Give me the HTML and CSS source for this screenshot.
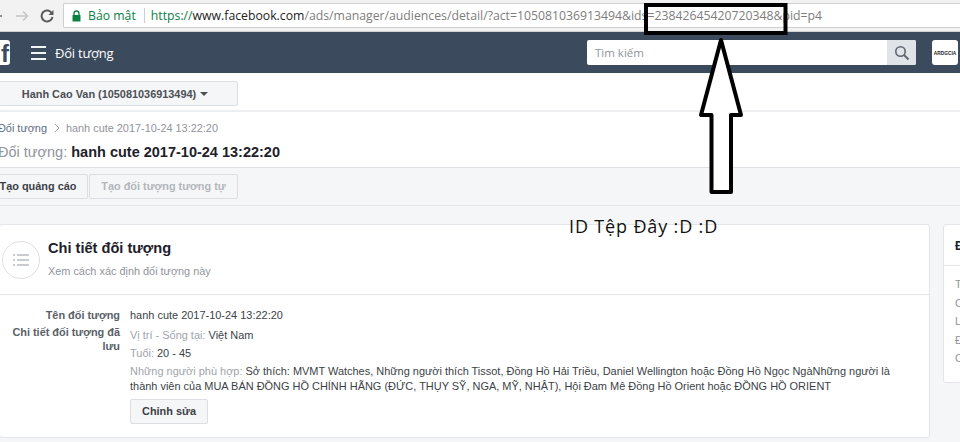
FILE: index.html
```html
<!DOCTYPE html>
<html lang="vi">
<head>
<meta charset="utf-8">
<title>Đối tượng</title>
<link rel="stylesheet" href="styles.css">
</head>
<body>
<div class="page">
  <header class="browser">
    <svg class="nav-icon back" width="12" height="14" viewBox="0 0 12 14"><path d="M11 7H2M6 2.500L1.500 7 6 11.500" fill="none" stroke="#6a6a6a" stroke-width="1.600"/></svg>
    <svg class="nav-icon fwd" width="14" height="14" viewBox="0 0 14 14"><path d="M1 7h11M8 2.500L12.500 7 8 11.500" fill="none" stroke="#c6c6c6" stroke-width="1.600"/></svg>
    <svg class="nav-icon reload" width="14" height="14" viewBox="0 0 14 14"><path d="M12 4.500A5.500 5.500 0 1 0 12.500 8" fill="none" stroke="#5a5a5a" stroke-width="2"/><path d="M13.500 1v5h-5z" fill="#5a5a5a"/></svg>
    <div class="omnibox">
      <svg class="lock" width="9" height="12" viewBox="0 0 9 12"><path d="M2 5V3.500a2.500 2.500 0 0 1 5 0V5" fill="none" stroke="#0b8043" stroke-width="1.300"/><rect x="0.500" y="5" width="8" height="6.500" rx="0.500" fill="#0b8043"/></svg>
      <span class="secure">Bảo mật</span>
      <span class="divider"></span>
      <span class="url"><span class="scheme">https://</span><span class="host">www.facebook.com</span>/ads/manager/audiences/detail/?act=105081036913494&amp;ids=23842645420720348&amp;pid=p4</span>
    </div>
  </header>

  <nav class="topbar">
    <div class="brand">f</div>
    <span class="burger"><i></i><i></i><i></i></span>
    <span class="section">Đối tượng</span>
    <div class="search">
      <span class="search-text">Tìm kiếm</span>
      <span class="search-btn">
        <svg width="16" height="16" viewBox="0 0 16 16"><circle cx="6.500" cy="6.500" r="4.700" fill="none" stroke="#5d6670" stroke-width="1.600"/><path d="M10 10l4.500 4.500" stroke="#5d6670" stroke-width="2"/></svg>
      </span>
    </div>
    <div class="avatar"><span>ARDGCIA</span></div>
  </nav>

  <div class="account-row">
    <button class="account">Hanh Cao Van (105081036913494)<i class="caret"></i></button>
  </div>

  <section class="heading">
    <div class="crumbs"><span class="crumb-link">Đối tượng</span><svg width="6" height="10" viewBox="0 0 6 10"><path d="M1 1l4 4-4 4" fill="none" stroke="#a0a4ab" stroke-width="1"/></svg><span class="crumb-cur">hanh cute 2017-10-24 13:22:20</span></div>
    <h1 class="title"><span class="title-pre">Đối tượng:</span> <b>hanh cute 2017-10-24 13:22:20</b></h1>
  </section>

  <div class="actions">
    <button class="btn first">Tạo quảng cáo</button>
    <button class="btn off">Tạo đối tượng tương tự</button>
  </div>

  <main class="content">
    <article class="card main-card">
      <div class="card-head">
        <span class="round">
          <svg width="16" height="14" viewBox="0 0 16 14"><path d="M0 2h2M4 2h12M0 7h2M4 7h12M0 12h2M4 12h12" stroke="#c9ccd1" stroke-width="2"/></svg>
        </span>
        <div>
          <h2 class="card-title">Chi tiết đối tượng</h2>
          <p class="card-sub">Xem cách xác định đối tượng này</p>
        </div>
      </div>
      <div class="card-body">
        <div class="labels">
          <div class="label">Tên đối tượng</div>
          <div class="label">Chi tiết đối tượng đã lưu</div>
        </div>
        <div class="values">
          <div class="v-name">hanh cute 2017-10-24 13:22:20</div>
          <div class="v-line"><span class="muted">Vị trí - Sống tại:</span> Việt Nam</div>
          <div class="v-line"><span class="muted">Tuổi:</span> 20 - 45</div>
          <div class="v-para"><span class="muted">Những người phù hợp:</span> Sở thích: MVMT Watches, Những người thích Tissot, Đồng Hồ Hải Triều, Daniel Wellington hoặc Đồng Hồ Ngọc NgàNhững người là thành viên của MUA BÁN ĐỒNG HỒ CHÍNH HÃNG (ĐỨC, THỤY SỸ, NGA, MỸ, NHẬT), Hội Đam Mê Đồng Hồ Orient hoặc ĐỒNG HỒ ORIENT</div>
          <button class="btn edit">Chỉnh sửa</button>
        </div>
      </div>
    </article>
    <aside class="card side-card">
      <div class="side-head">Đ</div>
      <div class="side-list"><span>T</span><span>C</span><span>L</span><span>Đ</span><span>C</span></div>
    </aside>
  </main>

  <svg class="annot" width="960" height="442" viewBox="0 0 960 442">
    <rect x="646" y="5" width="139.500" height="28" fill="none" stroke="#000" stroke-width="4"/>
    <path d="M721 40L701 115H711.500V192H731V115H741Z" fill="#fff" stroke="#000" stroke-width="4" stroke-linejoin="round"/>
  </svg>
  <div class="note">ID Tệp Đây :D :D</div>
</div>
</body>
</html>
```
FILE: styles.css
```css
* { box-sizing: border-box; }
html, body { margin: 0; padding: 0; }
body { width: 960px; height: 442px; overflow: hidden; background: #f5f6f7; font-family: "Liberation Sans", Arial, sans-serif; color: #1d2129; }
button { font-family: inherit; }
.page { position: relative; width: 960px; height: 442px; overflow: hidden; }

.browser { height: 32px; background: #f2f2f2; display: flex; align-items: center; border-bottom: 1px solid #d0d0d0; }
.nav-icon { flex: none; }
.back { margin-left: -9px; margin-right: 12px; }
.fwd { margin-right: 11px; }
.reload { margin-right: 9px; }
.omnibox { flex: 1; height: 25px; background: #fff; border: 1px solid #cfcfcf; border-right: 0; border-radius: 2px 0 0 2px; display: flex; align-items: center; padding-left: 8px; font-family: "Open Sans", sans-serif; font-size: 12.250px; white-space: nowrap; color: #7d7d7d; }
.lock { flex: none; margin-right: 7px; }
.secure { color: #0b8043; }
.divider { width: 1px; height: 15px; background: #cfcfcf; margin: 0 6px 0 8px; }
.scheme { color: #0b8043; }
.host { color: #222; }

.topbar { height: 41px; background: #3b4a5c; display: flex; align-items: center; color: #fff; }
.brand { width: 10px; height: 25px; margin-top: -1px; background: #fff; border-radius: 0 3px 3px 0; color: #3b4a5c; font-weight: 700; font-size: 24px; line-height: 28px; text-align: right; padding-right: 1px; overflow: hidden; }
.burger { display: flex; flex-direction: column; gap: 4px; width: 15px; margin-left: 21px; }
.burger i { display: block; height: 2px; background: #f3f4f5; }
.section { margin-left: 9px; font-family: "Open Sans", sans-serif; font-size: 13px; letter-spacing: -0.200px; }
.search { width: 329px; height: 25px; margin-left: auto; background: #fff; border-radius: 2px; display: flex; align-items: center; justify-content: space-between; overflow: hidden; }
.search-text { padding-left: 8px; color: #90949c; font-family: "Open Sans", sans-serif; font-size: 11.500px; }
.search-btn { width: 29px; height: 25px; background: #e0e3e7; display: flex; align-items: center; justify-content: center; }
.avatar { width: 26px; height: 25px; margin-left: 16px; margin-right: 2px; background: #fff; border-radius: 3px; overflow: hidden; display: flex; align-items: center; justify-content: center; }
.avatar span { color: #222; font-size: 6px; font-weight: 700; white-space: nowrap; transform: scaleX(0.8); }

.account-row { height: 39px; background: #fff; padding-top: 8px; border-bottom: 2px solid #eceef0; }
.account { display: flex; align-items: center; justify-content: center; width: 239px; height: 25px; margin-left: -1px; background: #f5f6f7; border: 1px solid #dcdee3; border-radius: 2px; font-size: 10.900px; font-weight: 700; color: #4b4f56; padding: 0 7px 0 0; }
.caret { width: 0; height: 0; margin-left: 4px; margin-top: 1px; border: 4px solid transparent; border-top: 4px solid #4b4f56; border-bottom: 0; }

.heading { height: 55px; background: #fff; padding-top: 9px; }
.crumbs { display: flex; align-items: center; margin-left: -2px; height: 13px; font-size: 10.900px; color: #90949c; white-space: nowrap; }
.crumb-link { color: #5d6c85; }
.crumbs svg { margin: 0 6px 0 7px; }
.title { margin: 9px 0 0 -2px; font-size: 14.500px; line-height: 18px; font-weight: 400; white-space: nowrap; }
.title-pre { color: #90949c; }
.title b { color: #1d2129; }

.actions { height: 39px; background: #f5f6f7; border-top: 1px solid #dddfe2; border-bottom: 1px solid #e6e7ea; padding-top: 6px; display: flex; gap: 1px; align-items: flex-start; }
.btn { height: 25px; border: 1px solid #dcdee3; background: #f5f6f7; font-size: 10.900px; font-weight: 700; color: #3b3f46; border-radius: 2px; padding: 0 0 2px; }
.first { width: 100px; margin-left: -12px; }
.off { width: 149px; color: #b3b6bb; }

.content { display: flex; align-items: flex-start; gap: 13px; padding-top: 18px; }
.card { background: #fff; border: 1px solid #e4e5e8; border-radius: 3px; flex: none; }
.main-card { width: 931px; height: 214px; margin-left: -1px; }
.card-head { height: 70px; display: flex; align-items: center; border-bottom: 1px solid #e4e5e8; padding-left: 2px; gap: 8px; }
.round { flex: none; width: 38px; height: 38px; border: 1px solid #dddfe2; border-radius: 50%; display: flex; align-items: center; justify-content: center; }
.card-title { margin: -3px 0 0; font-size: 14.600px; line-height: 18px; font-weight: 700; color: #1d2129; }
.card-sub { margin: 8px 0 0; font-size: 10.900px; line-height: 12px; color: #90949c; }
.card-body { display: flex; padding-top: 13px; font-size: 10.960px; color: #3b3f46; }
.labels { width: 120px; flex: none; text-align: right; font-weight: 700; color: #5a5f68; line-height: 14px; font-size: 10.900px; }
.label { margin-bottom: 3px; }
.values { margin-left: 10px; width: 770px; }
.v-name { line-height: 14px; margin-bottom: 6px; }
.v-line { line-height: 14px; margin-bottom: 4px; }
.v-para { line-height: 15px; }
.muted { color: #a0a4ab; }
.edit { width: 78px; height: 25px; margin-top: 5px; font-size: 10.900px; }

.side-card { width: 30px; height: 159px; }
.side-head { height: 41px; border-bottom: 1px solid #e4e5e8; padding: 14px 0 0 11px; font-size: 12px; font-weight: 700; }
.side-list { display: flex; flex-direction: column; padding: 9px 0 0 11px; font-size: 10.900px; line-height: 18.500px; color: #90949c; }

.annot { position: absolute; left: 0; top: 0; pointer-events: none; }
.note { position: absolute; left: 569px; top: 215px; font-family: "Open Sans", sans-serif; font-size: 18px; letter-spacing: 0.850px; line-height: 22px; color: #111; white-space: nowrap; }
```
